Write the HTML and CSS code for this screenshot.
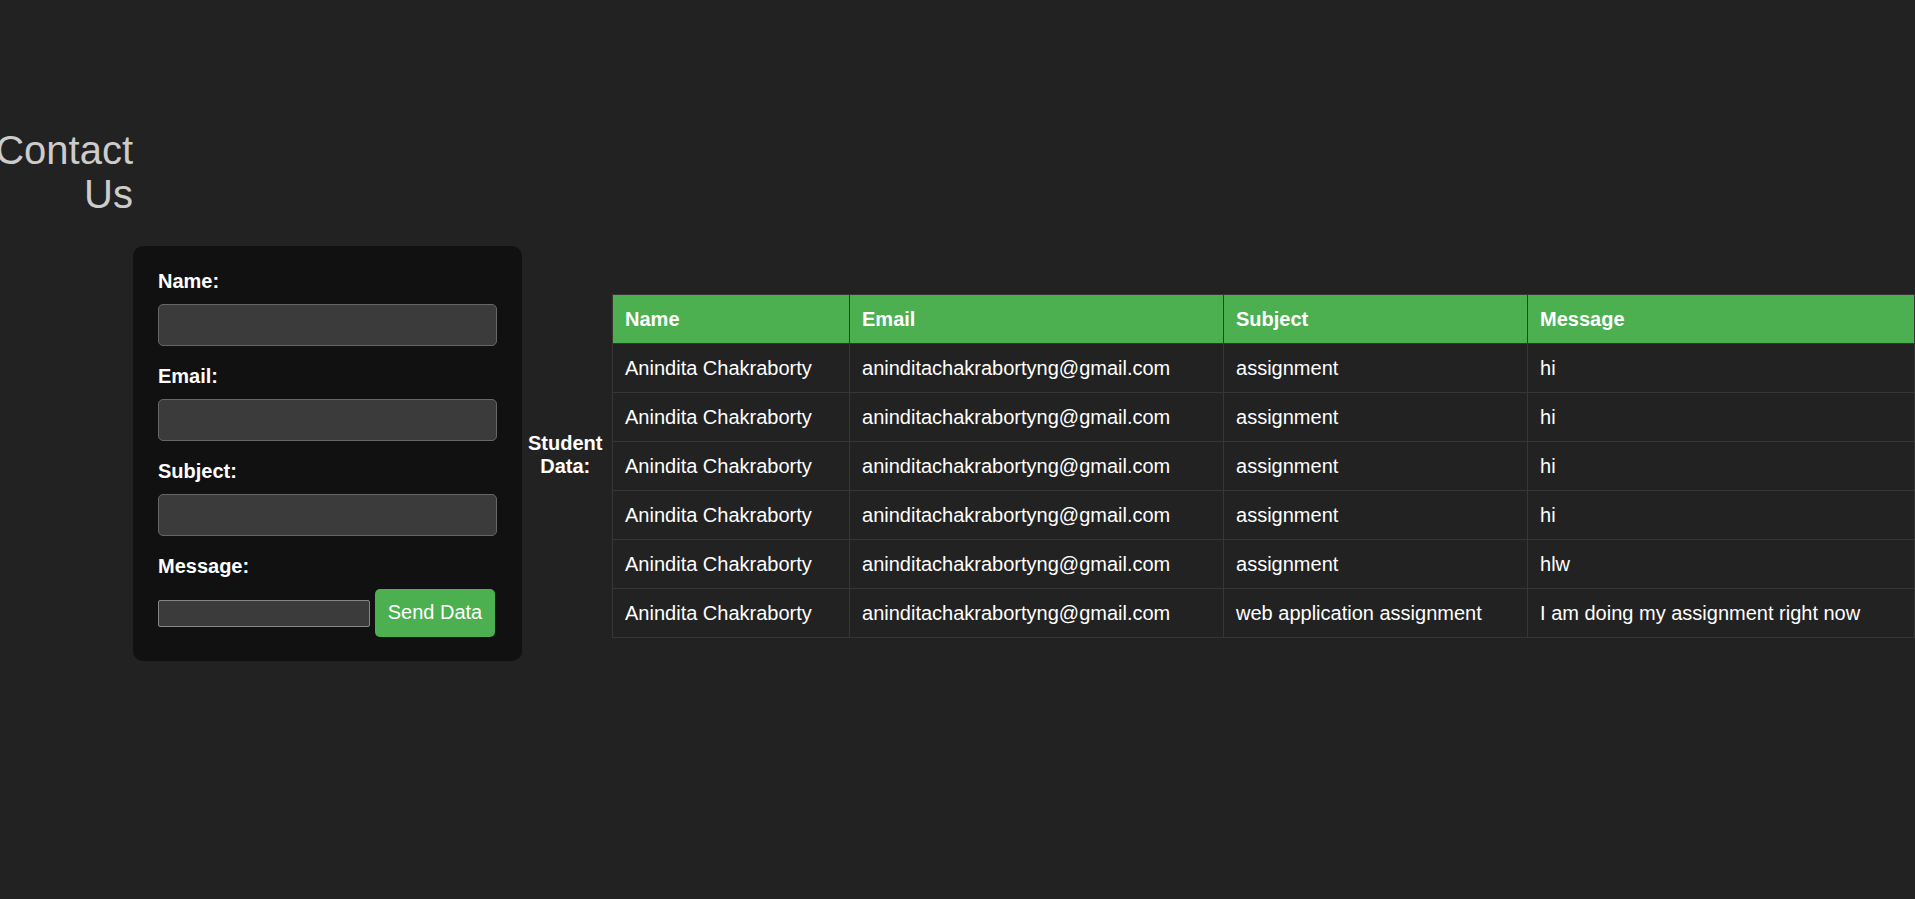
FILE: index.html
```html
<!DOCTYPE html>
<html lang="en">
<head>
<meta charset="utf-8">
<title>Contact Us</title>
<link rel="stylesheet" href="styles.css">
</head>
<body>
<div class="page">
  <h1 class="title">Contact Us</h1>
  <form class="contact-form">
    <label class="field-label" for="name">Name:</label>
    <input class="field-input" type="text" id="name">
    <label class="field-label" for="email">Email:</label>
    <input class="field-input" type="email" id="email">
    <label class="field-label" for="subject">Subject:</label>
    <input class="field-input" type="text" id="subject">
    <label class="field-label" for="message">Message:</label>
    <div class="message-row">
      <input class="message-input" type="text" id="message">
      <button class="send-btn" type="button">Send Data</button>
    </div>
  </form>
  <div class="data-label">Student Data:</div>
  <table class="data-table">
    <colgroup>
      <col class="c-name">
      <col class="c-email">
      <col class="c-subject">
      <col class="c-message">
    </colgroup>
    <thead>
      <tr><th>Name</th><th>Email</th><th>Subject</th><th>Message</th></tr>
    </thead>
    <tbody>
      <tr><td>Anindita Chakraborty</td><td>aninditachakrabortyng@gmail.com</td><td>assignment</td><td>hi</td></tr>
      <tr><td>Anindita Chakraborty</td><td>aninditachakrabortyng@gmail.com</td><td>assignment</td><td>hi</td></tr>
      <tr><td>Anindita Chakraborty</td><td>aninditachakrabortyng@gmail.com</td><td>assignment</td><td>hi</td></tr>
      <tr><td>Anindita Chakraborty</td><td>aninditachakrabortyng@gmail.com</td><td>assignment</td><td>hi</td></tr>
      <tr><td>Anindita Chakraborty</td><td>aninditachakrabortyng@gmail.com</td><td>assignment</td><td>hlw</td></tr>
      <tr><td>Anindita Chakraborty</td><td>aninditachakrabortyng@gmail.com</td><td>web application assignment</td><td>I am doing my assignment right now</td></tr>
    </tbody>
  </table>
</div>
</body>
</html>
```
FILE: styles.css
```css
* { box-sizing: border-box; }

html, body {
  margin: 0;
  padding: 0;
  background: #222222;
  font-family: "Liberation Sans", Arial, sans-serif;
  color: #ffffff;
  overflow: hidden;
}

.page {
  display: flex;
  flex-direction: row;
  align-items: center;
  height: 899px;
  padding-top: 7px;
  width: 1915px;
}

.title {
  flex: none;
  align-self: flex-start;
  width: 143px;
  margin: 121px 0 0 -10px;
  font-size: 40px;
  line-height: 44px;
  font-weight: normal;
  color: #cccccc;
  text-align: right;
}

.contact-form {
  flex: none;
  width: 389px;
  padding: 24px 25px;
  background: #111111;
  border-radius: 10px;
}

.field-label {
  display: block;
  font-size: 20px;
  line-height: 23px;
  font-weight: bold;
  color: #ffffff;
  margin-bottom: 11px;
}

.field-input {
  display: block;
  width: 100%;
  height: 42px;
  margin: 0 0 19px 0;
  background: #3b3b3b;
  border: 1px solid #666666;
  border-radius: 5px;
  color: #ffffff;
  font-family: inherit;
  font-size: 20px;
  padding: 0 10px;
}

.message-row {
  display: flex;
  align-items: center;
  gap: 5px;
}

.message-input {
  width: 212px;
  height: 27px;
  margin: 1px 0 0 0;
  background: #3b3b3b;
  border: 1px solid #858585;
  border-radius: 2px;
  color: #ffffff;
  padding: 0 3px;
}

.send-btn {
  width: 120px;
  height: 48px;
  padding: 0;
  background: #4caf50;
  color: #ffffff;
  border: none;
  border-radius: 5px;
  font-family: inherit;
  font-size: 20px;
  line-height: 23px;
}

.data-label {
  flex: none;
  width: min-content;
  margin: 4px 9.6px 0 6px;
  font-size: 20px;
  line-height: 23px;
  font-weight: bold;
  text-align: center;
}

.data-table {
  flex: none;
  width: 1302px;
  margin-top: 26px;
  border-collapse: collapse;
  table-layout: fixed;
  font-size: 20px;
  line-height: 23px;
}

.c-name { width: 237px; }
.c-email { width: 374px; }
.c-subject { width: 304px; }
.c-message { width: 387px; }

.data-table th,
.data-table td {
  border: 1px solid #363636;
  padding: 12.5px 12px;
  text-align: left;
  white-space: nowrap;
}

.data-table th {
  background: #4caf50;
  color: #ffffff;
  font-weight: bold;
}

.data-table td {
  background: #222222;
  color: #ffffff;
}
```
